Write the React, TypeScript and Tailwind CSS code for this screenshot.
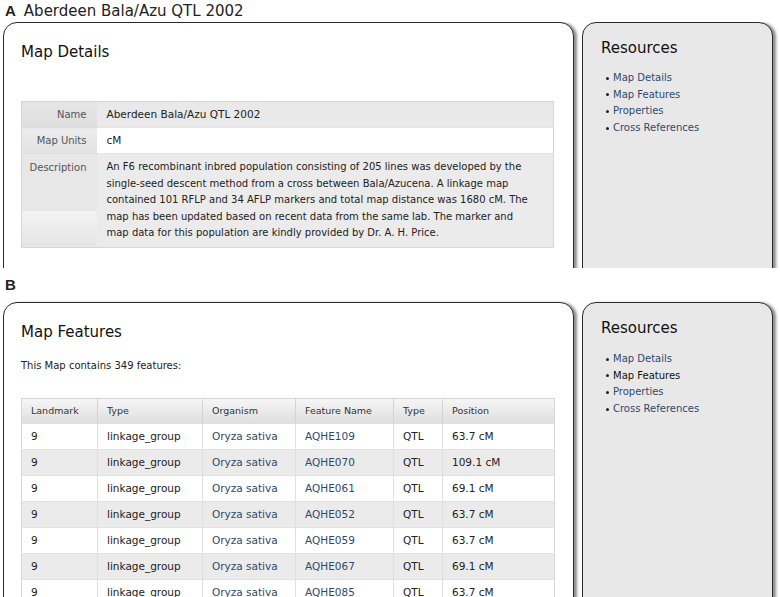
import React from "react"

const links = ["Map Details", "Map Features", "Properties", "Cross References"]

const features = [
  ["9", "linkage_group", "Oryza sativa", "AQHE109", "QTL", "63.7 cM"],
  ["9", "linkage_group", "Oryza sativa", "AQHE070", "QTL", "109.1 cM"],
  ["9", "linkage_group", "Oryza sativa", "AQHE061", "QTL", "69.1 cM"],
  ["9", "linkage_group", "Oryza sativa", "AQHE052", "QTL", "63.7 cM"],
  ["9", "linkage_group", "Oryza sativa", "AQHE059", "QTL", "63.7 cM"],
  ["9", "linkage_group", "Oryza sativa", "AQHE067", "QTL", "69.1 cM"],
  ["9", "linkage_group", "Oryza sativa", "AQHE085", "QTL", "63.7 cM"],
  ["9", "linkage_group", "Oryza sativa", "AQHE090", "QTL", "63.7 cM"],
]

function Sidebar({ active, listTop }: { active?: string; listTop: string }) {
  return (
    <aside className="w-[191px] shrink-0 h-[400px] rounded-t-[14px] border border-[#2a2a2a] bg-[#e9e8e9] shadow-[3px_1px_3px_rgba(0,0,0,0.45)] pl-[18px] pt-[15px]">
      <h2 className="text-[15px] leading-5 text-[#111]">Resources</h2>
      <ul className={`${listTop} text-[10px] leading-[16.6px]`}>
        {links.map((l) => (
          <li key={l} className="flex items-center">
            <span className="w-[3px] h-[3px] rounded-full bg-[#222] ml-[5px] mr-[4px]" />
            <span className={l === active ? "text-[#111]" : "text-[#2e4a6b]"}>{l}</span>
          </li>
        ))}
      </ul>
    </aside>
  )
}

function MapDetails() {
  return (
    <table className="w-[533px] border border-[#d6d6d6] border-collapse text-[10.5px] text-[#222]">
      <tbody>
        <tr className="h-[26px] bg-[#e9e9e9]">
          <th className="w-[75px] pr-[10px] text-right font-normal text-[10px] text-[#555] bg-gradient-to-b from-[#e6e6e6] to-[#dedede]">Name</th>
          <td className="px-[10px]">Aberdeen Bala/Azu QTL 2002</td>
        </tr>
        <tr className="h-[26px] bg-white">
          <th className="pr-[10px] text-right font-normal text-[10px] text-[#555] bg-gradient-to-b from-[#ececec] to-[#e2e2e2] border-y border-[#dcdcdc]">Map Units</th>
          <td className="px-[10px] border-y border-[#e4e4e4]">cM</td>
        </tr>
        <tr className="bg-[#ebebeb]">
          <th className="align-top p-0 font-normal text-[10px] text-[#555]">
            <div className="h-[57px] bg-[#e7e7e7] pr-[10px] pt-[6px] text-right">Description</div>
            <div className="h-[35px] bg-gradient-to-b from-[#f3f3f3] to-[#e6e6e6]" />
          </th>
          <td className="px-[10px] py-[5px] text-[10px] leading-[16.5px] whitespace-nowrap">
            An F6 recombinant inbred population consisting of 205 lines was developed by the
            <br />
            single-seed descent method from a cross between Bala/Azucena. A linkage map
            <br />
            contained 101 RFLP and 34 AFLP markers and total map distance was 1680 cM. The
            <br />
            map has been updated based on recent data from the same lab. The marker and
            <br />
            map data for this population are kindly provided by Dr. A. H. Price.
          </td>
        </tr>
      </tbody>
    </table>
  )
}

function FeatureTable() {
  const heads = ["Landmark", "Type", "Organism", "Feature Name", "Type", "Position"]
  const widths = ["w-[76px]", "w-[105px]", "w-[93px]", "w-[98px]", "w-[49px]", "w-[112px]"]
  return (
    <table className="w-[533px] table-fixed border-collapse border border-[#d6d6d6] text-[10.5px] text-[#222]">
      <colgroup>
        {widths.map((w, i) => (
          <col key={i} className={w} />
        ))}
      </colgroup>
      <thead>
        <tr className="h-[25px] bg-gradient-to-b from-[#f6f6f6] to-[#dedede]">
          {heads.map((h, i) => (
            <th key={i} className="px-[9px] text-left font-normal text-[9.5px] text-[#333] border-l border-[#d4d4d4] first:border-l-0">
              {h}
            </th>
          ))}
        </tr>
      </thead>
      <tbody>
        {features.map((r, i) => (
          <tr key={i} className={`h-[26px] border-t border-[#e2e2e2] ${i % 2 ? "bg-[#ebebeb]" : "bg-white"}`}>
            {r.map((c, j) => (
              <td
                key={j}
                className={`px-[9px] border-l border-[#e0e0e0] first:border-l-0 ${j === 2 || j === 3 ? "text-[#2e4a6b]" : ""}`}
              >
                {c}
              </td>
            ))}
          </tr>
        ))}
      </tbody>
    </table>
  )
}

export default function App() {
  return (
    <div className="w-[780px] h-[597px] overflow-hidden bg-white font-['DejaVu_Sans',sans-serif] text-[#222]">
      <div className="h-[22px] flex items-center pl-[5px] pt-[1px]">
        <span className="font-['Liberation_Sans',sans-serif] font-bold text-[15px] mr-[8px]">A</span>
        <span className="text-[15px]">Aberdeen Bala/Azu QTL 2002</span>
      </div>
      <div className="h-[246px] overflow-hidden flex gap-[8px] pl-[3px]">
        <section className="w-[571px] shrink-0 h-[400px] rounded-t-[14px] border border-[#2a2a2a] bg-white shadow-[3px_1px_3px_rgba(0,0,0,0.45)] pl-[17px] pt-[19px]">
          <h2 className="text-[15px] leading-5 text-[#111]">Map Details</h2>
          <div className="mt-[39px]">
            <MapDetails />
          </div>
        </section>
        <Sidebar listTop="mt-[12px]" />
      </div>
      <div className="h-[34px] flex items-center pl-[5px] pt-[1px]">
        <span className="font-['Liberation_Sans',sans-serif] font-bold text-[15px]">B</span>
      </div>
      <div className="flex gap-[8px] pl-[3px]">
        <section className="w-[571px] shrink-0 h-[400px] rounded-t-[14px] border border-[#2a2a2a] bg-white shadow-[3px_1px_3px_rgba(0,0,0,0.45)] pl-[17px] pt-[19px]">
          <h2 className="text-[15px] leading-5 text-[#111]">Map Features</h2>
          <p className="mt-[18px] text-[10px] leading-[12px]">This Map contains 349 features:</p>
          <div className="mt-[26px]">
            <FeatureTable />
          </div>
        </section>
        <Sidebar active="Map Features" listTop="mt-[13px]" />
      </div>
    </div>
  )
}
